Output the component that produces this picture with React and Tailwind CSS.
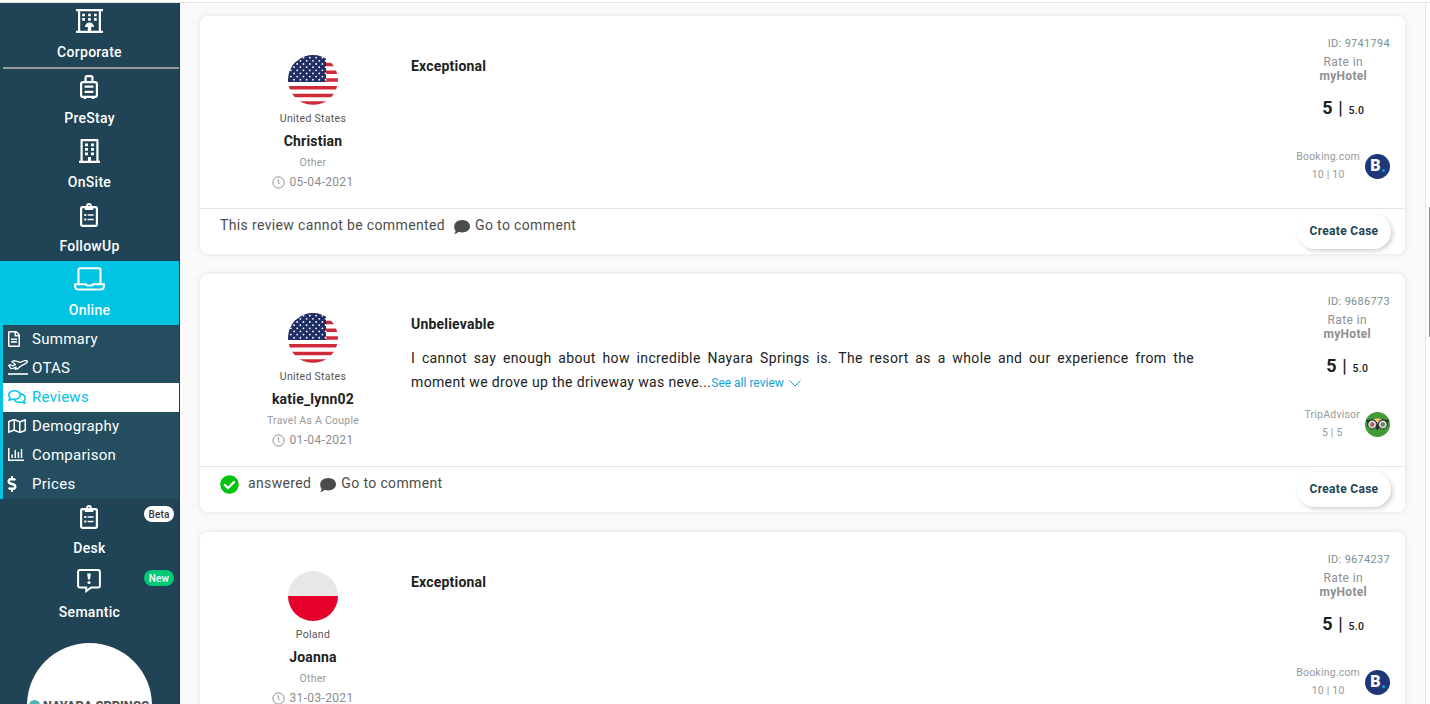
import { FaCheckCircle, FaDollarSign, FaRegComments, FaRegFileAlt, FaRegMap } from 'react-icons/fa'

function HotelIcon() {
  return (
    <svg width="27" height="24" viewBox="0 0 27 24" fill="currentColor">
      <path d="M0 0h27v2.2h-2v19.6h2V24H0v-2.2h2V2.2H0zM4.2 2.2v19.6h7.6V18H9a4.5 4.5 0 0 1 9 0h-2.8v3.8h7.6V2.2z" fillRule="evenodd" />
      <path d="M6.2 4.7h2.7v2.6H6.2zM12.1 4.7h2.7v2.6h-2.7zM18 4.7h2.7v2.6H18zM6.2 9.1h2.7v2.6H6.2zM12.1 9.1h2.7v2.6h-2.7zM18 9.1h2.7v2.6H18z" />
    </svg>
  )
}

function SuitcaseIcon() {
  return (
    <svg width="18" height="24" viewBox="0 0 18 24" fill="none" stroke="currentColor" strokeWidth="2.2" className="mr-px">
      <rect x="1.1" y="7.1" width="15.8" height="14.8" rx="2" />
      <path d="M5.6 7V2.6Q5.6 1.1 7 1.1h4q1.4 0 1.4 1.5V7M4.6 11.6h8.8M4.6 16.9h8.8M3.6 22.9h2.6M11.8 22.9h2.6" />
    </svg>
  )
}

function BuildingIcon() {
  return (
    <svg width="21" height="24" viewBox="0 0 21 24" fill="currentColor">
      <path d="M2.6 0h15.8q1.1 0 1.1 1.1v20.7H21V24H0v-2.2h1.5V1.1Q1.5 0 2.6 0zM3.7 2.2v19.6h5.3V18h3v3.8h5.3V2.2z" fillRule="evenodd" />
      <path d="M6 4.6h3v2.7H6zM12 4.6h3v2.7h-3zM6 9.1h3v2.7H6zM12 9.1h3v2.7h-3zM6 13.6h3v2.7H6zM12 13.6h3v2.7h-3z" />
    </svg>
  )
}

function ClipboardIcon() {
  return (
    <svg width="18" height="24" viewBox="0 0 18 24" fill="none" stroke="currentColor" className="mr-px">
      <rect x="1.1" y="4.1" width="15.8" height="18.8" rx="1.3" strokeWidth="2.2" />
      <path d="M4.6 3h1.5a2.9 2.9 0 0 1 5.8 0h1.5v3.2q0 .8-.8.8H5.4q-.8 0-.8-.8zM9 2a1 1 0 1 0 0 2a1 1 0 1 0 0-2z" fill="currentColor" fillRule="evenodd" stroke="none" />
      <path d="M7.6 12h6M7.6 16.4h6" strokeWidth="1.5" />
      <path d="M4.3 12h2M4.3 16.4h2" strokeWidth="2" />
    </svg>
  )
}

function LaptopIcon() {
  return (
    <svg width="31" height="24" viewBox="0 0 31 24" fill="none" stroke="currentColor" strokeWidth="2.1">
      <path d="M4.5 17V3q0-1.8 1.8-1.8h18.4q1.8 0 1.8 1.8v14" />
      <path d="M1.1 17.3H12q.3 1.2 1.5 1.2h4q1.2 0 1.5-1.2h10.9v1.6q0 3.6-3.6 3.6H4.7q-3.6 0-3.6-3.6z" />
    </svg>
  )
}

function SemanticIcon() {
  return (
    <svg width="24" height="24" viewBox="0 0 24 24" fill="none" stroke="currentColor" className="mr-px">
      <path d="M3 1.1h18q1.9 0 1.9 1.9v13.5q0 1.9-1.9 1.9h-6.8l-5 3.7v-3.7H3q-1.9 0-1.9-1.9V3q0-1.9 1.9-1.9z" strokeWidth="2" />
      <path d="M10.2 4.600h3.600l-.8 6h-2z" fill="currentColor" stroke="none" />
      <circle cx="12" cy="13.500" r="1.600" fill="currentColor" stroke="none" />
    </svg>
  )
}

function DepartureIcon() {
  return (
    <svg width="20" height="15" viewBox="0 0 20 15" fill="none" stroke="currentColor" strokeWidth="1.3" strokeLinejoin="round" className="shrink-0">
      <path d="M.7 5.300l1.600-.6 2.200 1.300 2.900-1.400L3.900 1.700l2.400-1 6 1.700 3.200-1.400q3.300-1 3.900.3.300 1.300-2.300 2.600l-4.200 2-3.200 2.800-2.400.7.700-2.200-2.800 1.200-2.200.2z" />
      <path d="M0 14h20" strokeWidth="1.600" />
    </svg>
  )
}

function ChartIcon() {
  return (
    <svg width="16" height="13" viewBox="0 0 16 13" fill="none" stroke="currentColor" strokeWidth="1.500">
      <path d="M.75 0v12.200H16M4.200 10V6.500M7.300 10V2M10.400 10V4M13.500 10V1" />
    </svg>
  )
}

function ClockIcon() {
  return (
    <svg width="13" height="13" viewBox="0 0 13 13" fill="none" stroke="currentColor">
      <circle cx="6.500" cy="6.500" r="5.600" />
      <path d="M6.300 3.200v3.500l1.700 1.700" />
    </svg>
  )
}

function CommentIcon() {
  return (
    <svg width="16" height="14" viewBox="0 0 16 14" fill="currentColor">
      <path d="M8.200 0C12.600 0 16 2.800 16 6.300s-3.400 6.200-7.800 6.200c-1.300 0-2.500-.2-3.500-.7C3.700 13 2 13.800.2 14c.8-.9 1.300-2 1.300-3.400C.6 9.500.2 8 .2 6.300.2 2.800 3.800 0 8.200 0z" />
    </svg>
  )
}

const starRows = Array.from({ length: 8 }, (_, i) => i)
const starCols = Array.from({ length: 6 }, (_, i) => i)

function UsFlag() {
  return (
    <svg width="50" height="50" viewBox="0 0 50 50">
      <clipPath id="round"><circle cx="25" cy="25" r="25" /></clipPath>
      <g clipPath="url(#round)">
        <path d="M0 0h50v50H0z" fill="#fff" />
        <path d="M0 1.900h50M0 9.600h50M0 17.300h50M0 25h50M0 32.700h50M0 40.400h50M0 48.100h50" stroke="#cf2a38" strokeWidth="3.500" />
        <path d="M0 0h38v27H0z" fill="#1f2f66" />
        {starRows.map(r => starCols.map(c => (
          <circle key={`${r}-${c}`} cx={2.9 + c * 6.3 + (r % 2 ? 3.15 : 0)} cy={2.7 + r * 3.15} r="0.9" fill="#fff" />
        )))}
      </g>
    </svg>
  )
}

function PolandFlag() {
  return (
    <div className="h-[50px] w-[50px] overflow-hidden rounded-full bg-[#e8e7e5]">
      <div className="mt-[25px] h-[25px] bg-[#e4002b]" />
    </div>
  )
}

function BookingLogo() {
  return (
    <div className="flex h-[25px] w-[25px] items-center justify-center rounded-full bg-[#1e3778] text-[16px] leading-none font-black text-white">
      B
      <span className="mt-[8px] ml-px h-[3px] w-[3px] rounded-full bg-[#0c9fe0]" />
    </div>
  )
}

function TripAdvisorLogo() {
  return (
    <svg width="25" height="25" viewBox="0 0 25 25">
      <circle cx="12.500" cy="12.500" r="12.500" fill="#419b37" />
      <path d="M.8 7.800h4.700Q12.500 4.300 19.500 7.800h4.700l-1.500 2.400v4l-10.200 2-10.200-2v-4z" fill="#26302a" />
      <path d="M7.500 7.300q5-2 10 0-4 .8-5 4.700-1-3.900-5-4.700z" fill="#f2cf73" />
      <circle cx="7.200" cy="12.500" r="4.400" fill="#d8d8d8" stroke="#222" strokeWidth="0.800" />
      <circle cx="17.800" cy="12.500" r="4.400" fill="#d8d8d8" stroke="#222" strokeWidth="0.800" />
      <circle cx="7.200" cy="12.500" r="2.200" fill="#777" />
      <circle cx="17.800" cy="12.500" r="2.200" fill="#777" />
      <circle cx="7.200" cy="12.500" r="1.300" fill="#e04545" />
      <circle cx="17.800" cy="12.500" r="1.300" fill="#3fa53a" />
      <path d="m10.800 15.800 1.700 2.500 1.700-2.500z" fill="#222" />
    </svg>
  )
}

function NavItem({ icon, label, active, badge, badgeClass }) {
  return (
    <div className={`relative flex h-16 w-[179px] shrink-0 flex-col items-center pt-1.5 text-white ${active ? 'bg-[#00c4e2]' : ''}`}>
      <div className="flex h-6 items-center">{icon}</div>
      <span className="mt-[9px] text-[14px] leading-5 font-medium tracking-[0.28px]">{label}</span>
      {badge && (
        <span className={`absolute top-[7px] right-[5px] flex h-4 w-[30px] items-center justify-center rounded-full text-[10px] font-medium tracking-[0.2px] ${badgeClass}`}>
          {badge}
        </span>
      )}
    </div>
  )
}

const subItems = [
  { label: 'Summary', icon: <FaRegFileAlt size={16} className="-ml-0.5" /> },
  { label: 'OTAS', icon: <DepartureIcon /> },
  { label: 'Reviews', icon: <FaRegComments size={18} />, active: true },
  { label: 'Demography', icon: <FaRegMap size={18} /> },
  { label: 'Comparison', icon: <ChartIcon /> },
  { label: 'Prices', icon: <FaDollarSign size={16} className="-ml-1" /> },
]

function Sidebar() {
  return (
    <aside className="flex h-[701px] w-[180px] shrink-0 flex-col overflow-hidden border-r border-[#1b3b4c] bg-[#204456]">
      <NavItem icon={<HotelIcon />} label="Corporate" />
      <div className="mx-[3px] -mr-px h-0.5 w-44 shrink-0 bg-[#999]" />
      <NavItem icon={<SuitcaseIcon />} label="PreStay" />
      <NavItem icon={<BuildingIcon />} label="OnSite" />
      <NavItem icon={<ClipboardIcon />} label="FollowUp" />
      <NavItem icon={<LaptopIcon />} label="Online" active />
      <div className="w-[179px] shrink-0 border-l-[3px] border-[#00c4e2] bg-[#244e60]">
        {subItems.map(item => (
          <div
            key={item.label}
            className={`flex h-[29px] items-center pl-[5px] text-[15px] tracking-[0.28px] ${item.active ? 'bg-white text-[#00c4e2]' : 'text-white'}`}
          >
            <span className="flex w-6 items-center pb-0.5">{item.icon}</span>
            {item.label}
          </div>
        ))}
      </div>
      <NavItem icon={<ClipboardIcon />} label="Desk" badge="Beta" badgeClass="bg-white text-[#333]" />
      <NavItem icon={<SemanticIcon />} label="Semantic" badge="New" badgeClass="bg-[#00c978] text-white" />
      <div className="mt-4 ml-[27px] flex h-[125px] w-[125px] shrink-0 items-start overflow-hidden rounded-full bg-white pt-[55px] pl-0.5">
        <span className="mt-0.5 h-[11px] w-[11px] shrink-0 rounded-full bg-[#4db5ba]" />
        <span className="ml-[3px] text-[12.700px] leading-4 font-black whitespace-nowrap text-[#555]">NAYARA SPRINGS</span>
      </div>
    </aside>
  )
}

const reviews = [
  { id: '9741794', country: 'United States', name: 'Christian', type: 'Other', date: '05-04-2021', title: 'Exceptional', source: 'Booking.com', score: '10 | 10' },
  {
    id: '9686773', country: 'United States', name: 'katie_lynn02', type: 'Travel As A Couple', date: '01-04-2021', title: 'Unbelievable', source: 'TripAdvisor', score: '5 | 5', answered: true,
    text: 'I cannot say enough about how incredible Nayara Springs is. The resort as a whole and our experience from the moment we drove up the driveway was neve...',
  },
  { id: '9674237', country: 'Poland', name: 'Joanna', type: 'Other', date: '31-03-2021', title: 'Exceptional', source: 'Booking.com', score: '10 | 10' },
]

function ReviewCard({ review }) {
  return (
    <article className="h-[238px] shrink-0 rounded-lg bg-white shadow-[0_0_6px_rgba(0,0,0,0.1)]">
      <div className="flex h-[193px] border-b border-[#e4e4e4] px-[15px]">
        <div className="flex w-[196px] shrink-0 flex-col items-center pt-[39px]">
          {review.country === 'Poland' ? <PolandFlag /> : <UsFlag />}
          <span className="mt-[7px] text-[10.5px] leading-[14px] tracking-[0.3px] text-[#555]">{review.country}</span>
          <span className="mt-[5px] text-[14px] leading-5 font-bold tracking-[0.2px] text-[#212121]">{review.name}</span>
          <span className="mt-[5px] text-[10.5px] leading-[14px] tracking-[0.25px] text-[#999]">{review.type}</span>
          <span className="mt-1 flex items-center gap-1 text-[12px] leading-4 tracking-[0.35px] text-[#8d8d8d]">
            <ClockIcon />
            {review.date}
          </span>
        </div>

        <div className="w-[783px] pt-10 text-[#212121]">
          <h2 className="text-[14px] leading-5 font-bold tracking-[0.2px]">{review.title}</h2>
          {review.text && (
            <p className="mt-3 text-justify text-[14px] leading-6 tracking-[0.36px]">
              {review.text}
              <a className="text-[12px] tracking-normal text-[#17a2d8]">
                See all review
                <svg width="12" height="7" viewBox="0 0 12 7" fill="none" stroke="currentColor" className="ml-[5px] inline-block align-baseline">
                  <path d="m.5.5 5.500 5.500L11.500.5" />
                </svg>
              </a>
            </p>
          )}
        </div>

        <div className="ml-auto flex flex-col items-end pt-[21px] text-[#8f8f8f]">
          <span className="text-[11px] leading-[14px] tracking-[0.3px] text-[#78908f]">ID: {review.id}</span>
          <div className={`flex flex-col items-center ${review.answered ? 'mr-[19px]' : 'mr-[23px]'}`}>
            <span className="mt-1 text-[12px] leading-[14px] tracking-[0.4px]">Rate in</span>
            <span className="text-[12px] leading-[14px] font-bold tracking-[0.3px]">myHotel</span>
            <span className="mt-[13px] text-[18px] leading-6 font-bold tracking-[0.6px] text-[#212121]">
              5 <span className="font-medium">|</span> <span className="text-[10.5px] font-medium tracking-[0.3px]">5.0</span>
            </span>
          </div>
          <div className="mt-[25px] flex items-center gap-[5px]">
            <div className="text-center text-[10.5px] leading-[18px] tracking-[0.2px] text-[#999]">
              <p>{review.source}</p>
              <p>{review.score}</p>
            </div>
            {review.source === 'TripAdvisor' ? <TripAdvisorLogo /> : <BookingLogo />}
          </div>
        </div>
      </div>

      <div className="flex h-[45px] items-start pr-3.5 pl-5 text-[14px] leading-5 tracking-[0.36px] text-[#4d4d4d]">
        <div className="flex pt-1.5">
          {review.answered ? (
            <>
              <FaCheckCircle size={19} className="mt-0.5 mr-[9px] text-[#00c30b]" />
              <span>answered</span>
            </>
          ) : (
            <span>This review cannot be commented</span>
          )}
          <span className="mt-[5px] mr-[5px] ml-[9px] text-[#4b4b4b]"><CommentIcon /></span>
          <span>Go to comment</span>
        </div>
        <button className="mt-[5px] ml-auto h-[35px] w-[94px] rounded-full bg-white pb-0.5 text-[12px] font-bold tracking-[0.3px] text-[#204456] shadow-[2px_2px_4px_rgba(0,0,0,0.18)]">
          Create Case
        </button>
      </div>
    </article>
  )
}

export default function App() {
  return (
    <div className="h-[704px] w-[1430px] overflow-hidden bg-white font-['Roboto',sans-serif]">
      <div className="h-[3px] border-b border-[#e4e4e4]" />
      <div className="flex h-[701px]">
        <Sidebar />
        <main className="flex w-[1246px] flex-col gap-5 overflow-hidden border-r border-[#e4e4e4] bg-[#fafafa] pt-[13px] pr-5 pl-5">
          {reviews.map(review => <ReviewCard key={review.id} review={review} />)}
        </main>
        <div className="ml-auto flex w-px">
          <div className="mt-[204px] h-[130px] w-px bg-[#8d8d8d]" />
        </div>
      </div>
    </div>
  )
}
